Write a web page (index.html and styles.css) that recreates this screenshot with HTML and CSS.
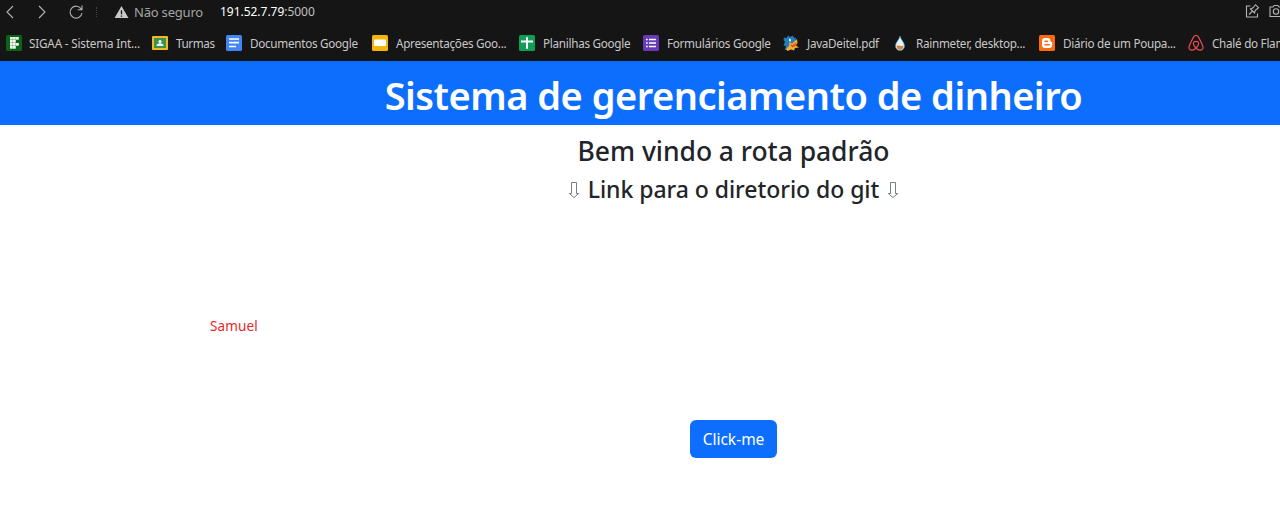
FILE: index.html
```
<!DOCTYPE html>
<html lang="pt-BR">
<head>
<meta charset="utf-8">
<title>Sistema de gerenciamento de dinheiro</title>
<link rel="stylesheet" href="styles.css">
</head>
<body>
<div class="browser">
  <div class="toolbar">
    <svg class="tool back" viewBox="0 0 16 16"><path d="M11 2 5 8l6 6"/></svg>
    <svg class="tool forward" viewBox="0 0 16 16"><path d="m5 2 6 6-6 6"/></svg>
    <svg class="tool reload" viewBox="0 0 16 16"><path d="M13.3 5.2A6 6 0 1 0 14 9M14 1.5v4.2H9.8"/></svg>
    <span class="divider"></span>
    <svg class="warning" viewBox="0 0 16 14"><path d="M8 .7 15.4 13.4H.6z" fill="#c9c9c9"/><path d="M8 5v4.4M8 10.6v1.5" stroke="#151515" stroke-width="1.4"/></svg>
    <span class="insecure">Não seguro</span>
    <span class="address"><b>191.52.7.79</b>:5000</span>
    <svg class="tool share" viewBox="0 0 16 16"><path d="M6.500 3H2.500v11h11v-3.500M5 11.500l3-3M6.500 6l4 4 .7-2.500L14.500 4.700 11.500 1.700 8.700 5z"/></svg>
    <svg class="tool camera" viewBox="0 0 16 16"><path d="M2 4h3l1-1.500h4L11 4h3v9.500H2z"/><circle cx="8" cy="8.500" r="2.700"/></svg>
  </div>
  <div class="bookmarks">
    <div class="bookmark w-sigaa"><svg viewBox="0 0 16 16"><rect width="16" height="16" rx="1.500" fill="#0b6415"/><g fill="#eef8ee"><rect x="4" y="2" width="2.800" height="2.700"/><rect x="7" y="2" width="2.800" height="2.700"/><rect x="10" y="2" width="2.800" height="2.700"/><rect x="4" y="5" width="2.800" height="2.700"/><rect x="7" y="5" width="2.800" height="2.700"/><rect x="4" y="8" width="2.800" height="2.700"/><rect x="7" y="8" width="2.800" height="2.700"/><rect x="10" y="8" width="2.800" height="2.700"/><rect x="4" y="11" width="2.800" height="2.700"/><rect x="7" y="11" width="2.800" height="2.700"/></g></svg><span>SIGAA - Sistema Int...</span></div>
    <div class="bookmark w-turmas"><svg viewBox="0 0 16 16"><rect y="1" width="16" height="14" rx="1" fill="#f4b91c"/><rect x="2" y="3" width="12" height="10" fill="#3d9150"/><circle cx="8" cy="6.500" r="1.500" fill="#fff"/><path d="M4.500 11V10c1.500-2.300 5.500-2.300 7 0v1z" fill="#eaf4eb"/></svg><span>Turmas</span></div>
    <div class="bookmark w-docs"><svg viewBox="0 0 16 16"><rect width="16" height="16" rx="1.500" fill="#4285f4"/><path d="M3 4h10M3 7.700h10M3 11.500h7" stroke="#fff" stroke-width="1.700"/></svg><span>Documentos Google</span></div>
    <div class="bookmark w-slides"><svg viewBox="0 0 16 16"><rect width="16" height="16" rx="1.500" fill="#f5b50b"/><rect x="2" y="4.500" width="12" height="6.500" fill="#fff"/></svg><span>Apresentações Goo...</span></div>
    <div class="bookmark w-sheets"><svg viewBox="0 0 16 16"><rect width="16" height="16" rx="1.500" fill="#109d58"/><path d="M2 6.500h12M8 2.300v11.400" stroke="#fff" stroke-width="2"/></svg><span>Planilhas Google</span></div>
    <div class="bookmark w-forms"><svg viewBox="0 0 16 16"><rect width="16" height="16" rx="1.500" fill="#673ab7"/><path d="M3 4.500h1.700M6 4.500h7M3 8h1.700M6 8h7M3 11.500h1.700M6 11.500h7" stroke="#fff" stroke-width="1.600"/></svg><span>Formulários Google</span></div>
    <div class="bookmark w-java"><svg viewBox="0 0 16 16"><path d="M1 2.500 3.500 3 5 .5 7 2l3-1.500.5 2L13 3l-1 4-5 2-1.500 5L1.500 15 3 11.500.5 10 2 7 .5 5z" fill="#217cc0"/><path d="M6.500 7 9 8.500 14 4l.5 4-1.500 2.500 3 2-4 .5-1 2.500-3-1-3.500 1.500L3 14l3-3z" fill="#f4ae30"/><path d="m7 9.500 3 .5 3.500-3-1 4-3 1.500z" fill="#d7532a"/><path d="m6 3.500 2 1v2L6 6z" fill="#fff"/></svg><span>JavaDeitel.pdf</span></div>
    <div class="bookmark w-rain"><svg viewBox="0 0 16 16"><path d="M8 1C7 5 3.500 7.500 3.500 11a4.500 4.500 0 0 0 9 0C12.500 7.500 9 5 8 1z" fill="#e5f3fb" stroke="#4794c8" stroke-width=".6"/><path d="M4.500 11c2-1.500 4 1 7-.5.3 5.500-7 5.500-7 .5z" fill="#d88438"/></svg><span>Rainmeter, desktop...</span></div>
    <div class="bookmark w-blog"><svg viewBox="0 0 16 16"><rect width="16" height="16" rx="1.500" fill="#f96b12"/><path d="M6 3h2.500C10.600 3 11.500 4.500 11.500 6c0 .8.300 1 .8 1s.9.400.9 1v2c0 2-1.200 3-3 3H6c-2 0-3-1-3-3V6c0-2 1-3 3-3z" fill="#fff"/><path d="M6 6.200h2.500M6 9.800h4.300" stroke="#f96b12" stroke-width="1.500" stroke-linecap="round"/></svg><span>Diário de um Poupa...</span></div>
    <div class="bookmark w-chale"><svg viewBox="0 0 16 16"><path d="M8 13.200C3.500 8.500 5.600 6.300 8 6.300s4.500 2.200 0 6.900c-2.500 3-7.600 2.500-7-1.200C1.300 10 5 2.900 6 1.400c.8-1.200 3.200-1.200 4 0 1 1.500 4.700 8.600 5 10.600.6 3.700-4.500 4.200-7 1.200z" fill="none" stroke="#ee4b55" stroke-width="1.200"/></svg><span>Chalé do Flam</span></div>
  </div>
</div>
<div class="page">
  <header class="banner"><h1>Sistema de gerenciamento de dinheiro</h1></header>
  <main class="content">
    <h2>Bem vindo a rota padrão</h2>
    <h3><svg class="arrow" viewBox="0 0 12 18"><path d="M3.500 1.500h5v11h2.200L6 16.500 1.300 12.500h2.200z"/></svg><span>Link para o diretorio do git</span><svg class="arrow" viewBox="0 0 12 18"><path d="M3.500 1.500h5v11h2.200L6 16.500 1.300 12.500h2.200z"/></svg></h3>
    <p class="author">Samuel</p>
    <button class="button" type="button">Click-me</button>
  </main>
</div>
</body>
</html>
```
FILE: styles.css
```
* { box-sizing: border-box; }
html { overflow: hidden; }
body {
  margin: 0;
  height: 507px;
  overflow: hidden;
  background: #fff;
  color: #212529;
  font-family: "Noto Sans", "Open Sans", sans-serif;
}
.browser {
  height: 61px;
  overflow: hidden;
  background: #151515;
  color: #c8c8c8;
}
.toolbar {
  display: flex;
  align-items: center;
  height: 23px;
  padding-left: 2px;
}
.tool {
  flex: none;
  width: 16px;
  height: 16px;
  fill: none;
  stroke: #b4b4b4;
  stroke-width: 1.1;
}
.forward { margin-left: 16px; }
.reload { margin-left: 18px; }
.divider {
  height: 10px;
  margin-left: 12px;
  border-left: 1px dotted #444;
}
.warning { width: 15px; height: 14px; margin-left: 17px; }
.insecure {
  width: 86px;
  margin-left: 5px;
  color: #a5a5a5;
  font-size: 13px;
  line-height: 22px;
  letter-spacing: -.2px;
  padding-top: 1px;
  white-space: nowrap;
}
.address { color: #c0c0c0; font-size: 12px; white-space: nowrap; letter-spacing: -.03px; }
.address b { color: #fff; font-weight: 400; }
.share { width: 16px; height: 16px; margin: 0 0 2px auto; }
.camera { margin: 0 -4px 2px 8px; }
.bookmarks {
  display: flex;
  height: 38px;
  padding: 2px 0 0 6px;
  overflow: hidden;
}
.bookmark {
  display: flex;
  flex: none;
  align-items: center;
  gap: 8px;
  height: 36px;
  font-size: 11.7px;
  white-space: nowrap;
  letter-spacing: -.28px;
}
.bookmark svg { flex: none; width: 16px; height: 16px; }
.w-sigaa { width: 146px; gap: 7px; letter-spacing: -.18px; }
.w-turmas { width: 74px; letter-spacing: -.4px; }
.w-docs { width: 146px; }
.w-slides { width: 147px; }
.w-sheets { width: 124px; }
.w-forms { width: 140px; }
.w-java { width: 109px; }
.w-rain { width: 147px; }
.w-blog { width: 149px; }
.w-chale { width: 86px; }
.banner {
  display: flex;
  justify-content: center;
  height: 64px;
  padding: 10px 0 0 187px;
  background: #0d6efd;
  color: #fff;
}
h1, h2, h3, p { margin: 0; }
h1 {
  font-size: 38px;
  font-weight: 560;
  line-height: 48px;
  letter-spacing: -.5px;
}
.content {
  display: flex;
  flex-direction: column;
  align-items: center;
  padding: 9px 0 0 187px;
}
h2 {
  font-size: 26.5px;
  font-weight: 500;
  line-height: 34px;
  letter-spacing: -.05px;
}
h3 {
  display: flex;
  align-items: center;
  gap: 8px;
  margin-top: 7px;
  font-size: 23px;
  font-weight: 500;
  line-height: 29px;
  letter-spacing: -.05px;
}
.arrow { width: 12px; height: 18px; fill: none; stroke: #657078; stroke-width: .9; }
.author {
  align-self: flex-start;
  margin: 112px 0 0 23px;
  color: #e81f2b;
  font-size: 13.5px;
  line-height: 20px;
  letter-spacing: .15px;
}
.button {
  width: 87px;
  height: 38px;
  margin-top: 84px;
  padding: 0;
  border: 0;
  border-radius: 6px;
  background: #0d6efd;
  color: #fff;
  font: 400 15.500px/24px "Noto Sans", sans-serif;
}
```
